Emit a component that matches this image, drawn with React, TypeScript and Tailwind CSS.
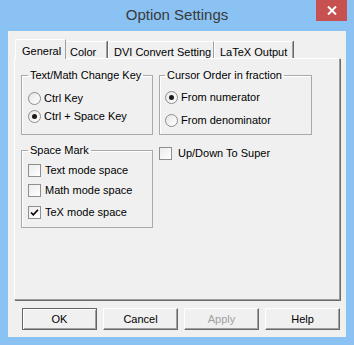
import React from 'react';

const font = { fontFamily: '"Liberation Sans", Arial, sans-serif' };

function Radio({ label, checked }: { label: string; checked?: boolean }) {
  return (
    <label className="flex items-center h-[18px] gap-[3px]">
      <span className="w-[13px] h-[13px] rounded-full border border-[#8c8c8c] bg-gradient-to-br from-[#e6e6e6] to-white flex items-center justify-center">
        {checked && <span className="w-[5px] h-[5px] rounded-full bg-[#1a1a1a]" />}
      </span>
      <span className="text-[11px] text-black leading-none whitespace-nowrap">{label}</span>
    </label>
  );
}

function Check({ label, checked }: { label: string; checked?: boolean }) {
  return (
    <label className="flex items-center h-[16px] gap-[4px]">
      <span className="w-[13px] h-[13px] border border-[#8f8f8f] bg-gradient-to-br from-[#ececec] to-white flex items-center justify-center">
        {checked && (
          <svg width="9" height="9" viewBox="0 0 9 9">
            <path d="M1 4.5 L3.3 6.8 L8 1.8" stroke="#000" strokeWidth="1.6" fill="none" />
          </svg>
        )}
      </span>
      <span className="text-[11px] text-black leading-none whitespace-nowrap">{label}</span>
    </label>
  );
}

function Button({ label, primary, disabled }: { label: string; primary?: boolean; disabled?: boolean }) {
  return (
    <button
      className={`w-[75px] h-[22px] text-[11px] bg-[#f0f0f0] ${
        primary
          ? 'border border-[#646464] shadow-[inset_1px_1px_0_#fff,inset_-1px_-1px_0_#a0a0a0]'
          : 'border-t border-l border-white border-r border-b border-r-[#696969] border-b-[#696969] shadow-[inset_-1px_-1px_0_#a0a0a0]'
      } ${disabled ? 'text-[#a0a0a0]' : 'text-black'}`}
    >
      {label}
    </button>
  );
}

function Group({ title, className, children }: { title: string; className: string; children: React.ReactNode }) {
  return (
    <fieldset className={`border border-[#a9a9a9] shadow-[inset_1px_1px_0_#fff] ${className}`}>
      <legend className="text-[11px] leading-[14px] text-black px-[2px] whitespace-nowrap">{title}</legend>
      {children}
    </fieldset>
  );
}

export default function App() {
  return (
    <div style={font} className="w-[354px] h-[345px] bg-[#8ac2f3] flex flex-col">
      {/* Title bar */}
      <div className="relative h-[31px] flex items-center justify-center">
        <span className="text-[15px] text-[#3a3a3a] -mt-[1px]">Option Settings</span>
        <div className="absolute right-[7px] top-0 w-[31px] h-[21px] bg-[#c75050] flex items-center justify-center">
          <svg width="10" height="9" viewBox="0 0 10 9">
            <path d="M1 0.5 L9 8.5 M9 0.5 L1 8.5" stroke="#fff" strokeWidth="2" />
          </svg>
        </div>
      </div>

      {/* Client area */}
      <div className="mx-[8px] mb-[8px] flex-1 bg-[#f0f0f0] flex flex-col px-[6px] pt-[8px]">
        {/* Tabs */}
        <div className="flex items-end h-[19px] pl-[1px] relative z-10">
          <div className="w-[51px] h-[20px] -mb-[1px] bg-[#f0f0f0] border-t border-l border-white border-r border-r-[#a0a0a0] text-[11px] text-black pl-[6px] pt-[3px]">
            General
          </div>
          <div className="w-[41px] h-[17px] border-t border-white border-r border-r-[#a0a0a0] shadow-[1px_0_0_#696969] text-[11px] text-black pl-[4px] pt-[2px]">
            Color
          </div>
          <div className="ml-[1px] w-[106px] h-[17px] border-t border-l border-white border-r border-r-[#a0a0a0] shadow-[1px_0_0_#696969] text-[11px] text-black pl-[5px] pt-[2px]">
            DVI Convert Setting
          </div>
          <div className="w-[79px] h-[17px] border-t border-l border-white border-r border-r-[#a0a0a0] shadow-[1px_0_0_#696969] text-[11px] text-black pl-[5px] pt-[2px]">
            LaTeX Output
          </div>
        </div>

        {/* Tab panel */}
        <div className="w-[326px] h-[242px] border-t border-l border-white border-r border-b border-r-[#a0a0a0] border-b-[#a0a0a0] shadow-[1px_1px_0_#696969] pl-[6px] pt-[9px]">
          <div className="grid grid-cols-[132px_153px] gap-x-[6px] gap-y-[8px]">
            <Group title="Text/Math Change Key" className="h-[67px] px-[6px]">
              <div className="pt-[7px] flex flex-col">
                <Radio label="Ctrl Key" />
                <Radio label="Ctrl + Space Key" checked />
              </div>
            </Group>
            <Group title="Cursor Order in fraction" className="h-[67px] px-[5px]">
              <div className="pt-[6px] flex flex-col gap-[5px]">
                <Radio label="From numerator" checked />
                <Radio label="From denominator" />
              </div>
            </Group>
            <Group title="Space Mark" className="h-[85px] px-[6px]">
              <div className="pt-[5px] flex flex-col">
                <Check label="Text mode space" />
                <div className="h-[4px]" />
                <Check label="Math mode space" />
                <div className="h-[6px]" />
                <Check label="TeX mode space" checked />
              </div>
            </Group>
            <div className="pt-[2px] [&>label]:gap-[6px]">
              <Check label="Up/Down To Super" />
            </div>
          </div>
        </div>

        {/* Buttons */}
        <div className="flex justify-end gap-[6px] w-[326px] mt-[8px]">
          <Button label="OK" primary />
          <Button label="Cancel" />
          <Button label="Apply" disabled />
          <Button label="Help" />
        </div>
      </div>
    </div>
  );
}
